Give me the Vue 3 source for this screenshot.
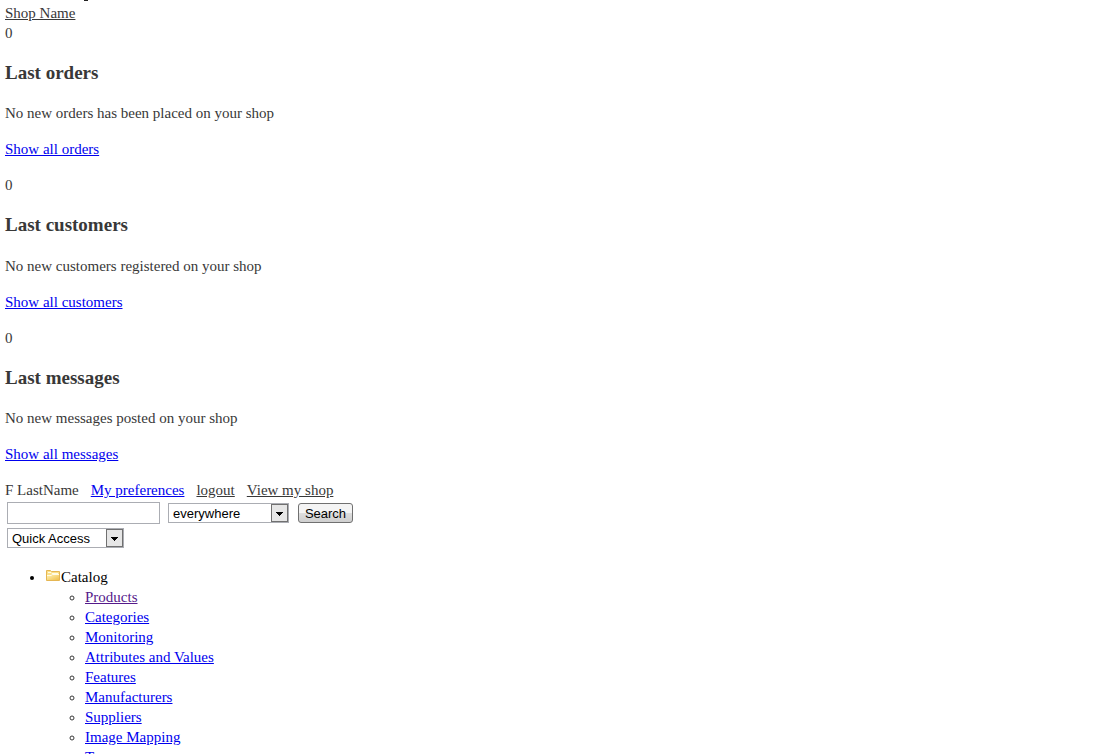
<script setup>
const panels = [
  { count: 0, title: 'Last orders', text: 'No new orders has been placed on your shop', link: 'Show all orders' },
  { count: 0, title: 'Last customers', text: 'No new customers registered on your shop', link: 'Show all customers' },
  { count: 0, title: 'Last messages', text: 'No new messages posted on your shop', link: 'Show all messages' },
]
const catalog = [
  'Products', 'Categories', 'Monitoring', 'Attributes and Values', 'Features',
  'Manufacturers', 'Suppliers', 'Image Mapping', 'Tags',
]
</script>

<template>
  <div class="page">
    <div class="edge"></div>
    <header>
      <a class="plain" href="#">Shop Name</a>
    </header>

    <section v-for="panel in panels" :key="panel.title">
      <div>{{ panel.count }}</div>
      <h3>{{ panel.title }}</h3>
      <p>{{ panel.text }}</p>
      <p><a href="#">{{ panel.link }}</a></p>
    </section>

    <nav class="user">
      <span>F LastName</span>
      <a href="#">My preferences</a>
      <a class="plain" href="#">logout</a>
      <a class="plain" href="#">View my shop</a>
    </nav>

    <form class="search" @submit.prevent>
      <input type="text" aria-label="Search terms">
      <span class="select">
        <select class="scope" aria-label="Search in"><option>everywhere</option></select>
        <svg width="17" height="18" viewBox="0 0 17 18" aria-hidden="true">
          <rect class="knob" x=".5" y=".5" width="16" height="17" />
          <path d="M5 8h7v1h-1v1h-1v1H9v1H8v-1H7v-1H6V9H5z" />
        </svg>
      </span>
      <button type="submit">Search</button>
    </form>

    <div class="quick">
      <span class="select">
        <select class="access" aria-label="Quick Access"><option>Quick Access</option></select>
        <svg width="17" height="18" viewBox="0 0 17 18" aria-hidden="true">
          <rect class="knob" x=".5" y=".5" width="16" height="17" />
          <path d="M5 8h7v1h-1v1h-1v1H9v1H8v-1H7v-1H6V9H5z" />
        </svg>
      </span>
    </div>

    <ul class="menu">
      <li>
        <svg class="folder" width="16" height="16" viewBox="0 0 16 16" aria-hidden="true">
          <defs>
            <linearGradient id="folderFill" x1="0" y1="0" x2="1" y2="1">
              <stop offset="0" stop-color="#fff3b8" />
              <stop offset="1" stop-color="#f0bf4a" />
            </linearGradient>
          </defs>
          <path d="M1.5 12.5v-10h4l1 1h8v9z" fill="#fbe08a" stroke="#e5b653" />
          <path d="M3 4.500h3l1 1h6" fill="none" stroke="#fffbe6" />
          <path d="M2 12V8h4l1.500-1.500H14V12z" fill="url(#folderFill)" />
          <path d="M2 7.500h4l1.500-1H14" fill="none" stroke="#fffbe6" />
        </svg>Catalog
        <ul>
          <li v-for="(item, i) in catalog" :key="item">
            <a href="#" :class="{ visited: i === 0 }">{{ item }}</a>
          </li>
        </ul>
      </li>
    </ul>
  </div>
</template>

<style>
body {
  margin: 0;
  background: #fff;
}
</style>

<style scoped>
.page {
  box-sizing: border-box;
  height: 100vh;
  overflow: hidden;
  padding: 0 5px;
  color: #383838;
  font: 15px/20px "Liberation Serif", "Times New Roman", serif;
}
.edge {
  width: 4px;
  height: 1px;
  margin: 0 0 2px 79px;
  background: #222;
}
a {
  color: #00e;
}
.plain {
  color: #383838;
}
.visited {
  color: #551a8b;
}
h3 {
  margin: 19px 0;
  font-size: 19px;
  line-height: 22px;
}
section:nth-of-type(2) h3 {
  margin-bottom: 20px;
}
p {
  margin: 0 0 16px;
}
.user {
  display: flex;
  gap: 12px;
}
.search {
  display: flex;
  align-items: center;
  padding: 2px 2px 1px;
}
input,
select,
button {
  box-sizing: border-box;
  margin: 0;
  font: 13px/16px "Liberation Sans", Arial, sans-serif;
  color: #000;
}
input {
  width: 153px;
  height: 22px;
  margin-right: 8px;
  padding: 1px 4px;
  border: 1px solid #abadb3;
}
.select {
  display: inline-grid;
  align-items: center;
}
.select > * {
  grid-area: 1 / 1;
}
.select svg {
  justify-self: end;
  margin-right: 1px;
  pointer-events: none;
}
.knob {
  fill: #e6e6e6;
  stroke: #707070;
}
select {
  height: 20px;
  padding: 2px 18px 0 4px;
  appearance: none;
  border: 1px solid #abadb3;
  border-radius: 0;
  background: #fff;
}
.scope {
  width: 121px;
}
.access {
  width: 117px;
}
button {
  width: 55px;
  height: 20px;
  margin-left: 9px;
  padding: 1px 0 0;
  border: 1px solid #707070;
  border-radius: 3px;
  background: linear-gradient(#f4f4f4 0 50%, #dedede 50%, #cfcfcf);
}
.quick {
  display: flex;
  padding: 3px 2px 0;
}
.menu {
  margin: 19px 0 0;
  padding-left: 40px;
  color: #000;
}
.menu ul {
  margin: 0;
  padding-left: 40px;
  color: #383838;
}
.folder {
  vertical-align: -2px;
}
</style>
